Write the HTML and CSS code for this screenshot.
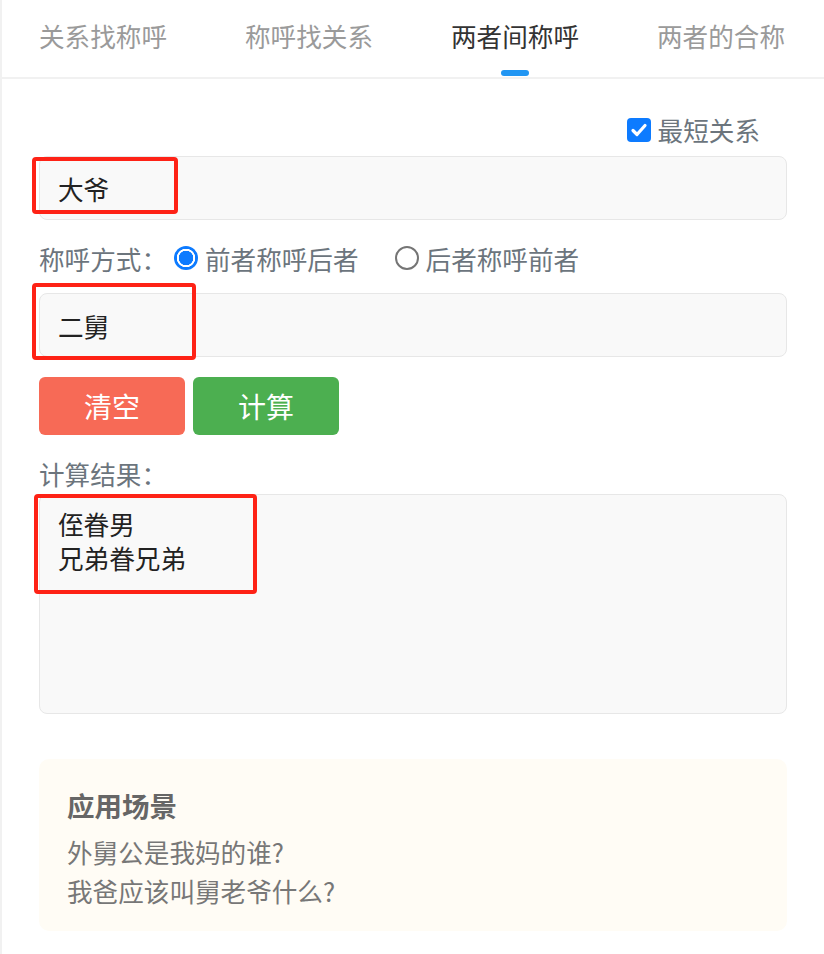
FILE: index.html
```html
<!DOCTYPE html>
<html lang="zh-CN">
<head>
<meta charset="utf-8">
<title>两者间称呼</title>
<link rel="stylesheet" href="styles.css">
</head>
<body>
<div class="page">
  <nav class="tabs">
    <div class="tab">关系找称呼</div>
    <div class="tab">称呼找关系</div>
    <div class="tab active">两者间称呼<span class="indicator"></span></div>
    <div class="tab">两者的合称</div>
  </nav>
  <main class="content">
    <div class="option-row">
      <label class="check">
        <span class="checkbox"><svg viewBox="0 0 24 24" width="24" height="24"><path d="M6 12.5l4 4 8-9" fill="none" stroke="#fff" stroke-width="3.2" stroke-linecap="round" stroke-linejoin="round"/></svg></span>
        <span class="check-label">最短关系</span>
      </label>
    </div>
    <div class="field">
      <input class="text-input" type="text" value="大爷">
      <span class="mark mark-1"></span>
    </div>
    <div class="mode-row">
      <span class="mode-label">称呼方式：</span>
      <label class="radio-item"><span class="radio on"></span><span>前者称呼后者</span></label>
      <label class="radio-item"><span class="radio"></span><span>后者称呼前者</span></label>
    </div>
    <div class="field">
      <input class="text-input" type="text" value="二舅">
      <span class="mark mark-2"></span>
    </div>
    <div class="buttons">
      <button class="btn btn-clear">清空</button>
      <button class="btn btn-calc">计算</button>
    </div>
    <div class="result-label">计算结果：</div>
    <div class="field">
      <div class="result-box">侄眷男<br>兄弟眷兄弟</div>
      <span class="mark mark-3"></span>
    </div>
    <section class="scene">
      <h3 class="scene-title">应用场景</h3>
      <p class="scene-line">外舅公是我妈的谁?</p>
      <p class="scene-line">我爸应该叫舅老爷什么?</p>
    </section>
  </main>
</div>
</body>
</html>
```

FILE: styles.css
```css
* { box-sizing: border-box; }
html, body { margin: 0; padding: 0; background: #fff; }
body {
  font-family: "Noto Sans CJK SC", "Noto Sans", sans-serif;
  font-size: 25.6px;
  color: #222;
}
.page {
  min-height: 954px;
  border-left: 2px solid #f1f1f1;
}
.tabs {
  display: grid;
  grid-template-columns: repeat(4, 1fr);
  height: 79px;
  border-bottom: 2px solid #f1f1f1;
  margin-left: -2px;
}
.tab {
  position: relative;
  text-align: center;
  color: #9a9a9a;
  line-height: 34px;
  padding-top: 19px;
}
.tab.active { color: #333; }
.indicator {
  position: absolute;
  left: 50%;
  top: 70px;
  width: 28px;
  height: 6px;
  margin-left: -14px;
  border-radius: 3px;
  background: #2196f3;
}
.content {
  padding: 0 37px 0 37px;
}
.option-row {
  display: flex;
  justify-content: flex-end;
  height: 40px;
  margin-top: 31px;
  padding-right: 27px;
  margin-bottom: 6px;
}
.check {
  display: flex;
  align-items: center;
  gap: 7px;
  color: #6c757d;
  line-height: 40px;
}
.checkbox {
  width: 24px;
  height: 24px;
  border-radius: 4px;
  background: #0d7bff;
  display: flex;
}
.field { position: relative; }
.text-input {
  display: block;
  width: 100%;
  height: 64px;
  border: 1px solid #e7e7e7;
  border-radius: 8px;
  background: #f9f9f9;
  padding: 0 18px;
  font-family: inherit;
  font-size: 25.6px;
  color: #222;
  outline: none;
}
.mode-row {
  display: flex;
  align-items: center;
  height: 40px;
  margin-top: 18px;
  margin-bottom: 15px;
  color: #6c757d;
}
.mode-label { margin-right: 7px; }
.radio-item {
  display: flex;
  align-items: center;
  gap: 7px;
  margin-right: 36px;
}
.radio {
  width: 24px;
  height: 24px;
  border-radius: 50%;
  border: 2px solid #757575;
  background: #fff;
}
.radio.on {
  border: none;
  background: radial-gradient(circle, #0d7bff 0 7px, #fff 7.5px 9px, #0d7bff 9.5px);
}
.buttons {
  display: flex;
  gap: 8px;
  margin-top: 20px;
}
.btn {
  width: 146px;
  height: 58px;
  border: none;
  border-radius: 6px;
  color: #fff;
  font-family: inherit;
  font-size: 28px;
  padding: 0;
}
.btn-clear { background: #f76a56; }
.btn-calc { background: #4caf50; }
.result-label {
  margin-top: 19px;
  height: 40px;
  line-height: 40px;
  color: #6c757d;
}
.result-box {
  height: 220px;
  border: 1px solid #e7e7e7;
  border-radius: 8px;
  background: #f9f9f9;
  padding: 12px 18px;
  line-height: 34px;
  color: #222;
}
.mark {
  position: absolute;
  border: 4px solid #fe2216;
  border-radius: 4px;
  pointer-events: none;
}
.mark-1 { left: -7px; top: 1px; width: 146px; height: 57px; }
.mark-2 { left: -7px; top: -10px; width: 164px; height: 77px; }
.mark-3 { left: -5px; top: 0; width: 223px; height: 100px; }
.scene {
  margin-top: 45px;
  background: #fffcf5;
  border-radius: 10px;
  padding: 26px 28px 21px;
}
.scene-title {
  margin: 0 0 7px;
  font-size: 27.5px;
  font-weight: 700;
  line-height: 40px;
  color: #666;
}
.scene-line {
  margin: 0;
  line-height: 39px;
  color: #777;
}
```
